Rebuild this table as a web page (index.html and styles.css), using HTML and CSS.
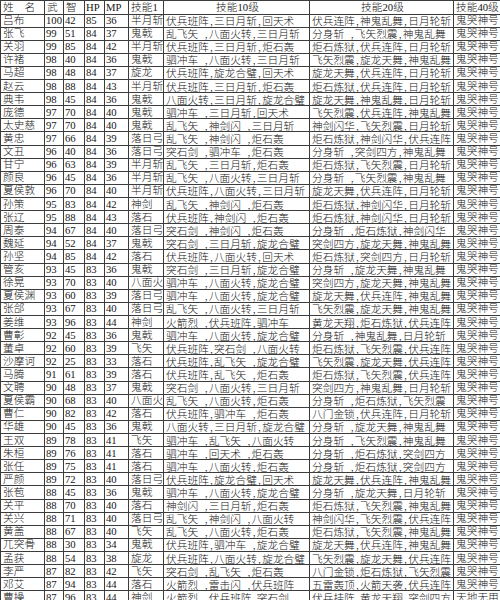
FILE: index.html
```html
<!DOCTYPE html>
<html lang="zh">
<head>
<meta charset="utf-8">
<title>武将技能表</title>
<link rel="stylesheet" href="styles.css">
</head>
<body>
<table class="sheet">
<colgroup>
<col class="c-name"><col class="c-wu"><col class="c-zhi"><col class="c-hp"><col class="c-mp"><col class="c-s1"><col class="c-s10"><col class="c-s20"><col class="c-s40">
</colgroup>
<thead>
<tr class="head"><td>姓　名</td><td>武</td><td>智</td><td class="lat">HP</td><td class="lat">MP</td><td>技能1</td><td class="ctr">技能10级</td><td class="ctr">技能20级</td><td>技能40级</td></tr>
</thead>
<tbody>
<tr><td>吕布</td><td class="num">100</td><td class="num">42</td><td class="num">85</td><td class="num">36</td><td>半月斩</td><td class="sk">伏兵班阵,三日月斩,回天术</td><td class="sk">伏兵连阵,神鬼乱舞,日月轮斩</td><td>鬼哭神号</td></tr>
<tr><td>张飞</td><td class="num">99</td><td class="num">51</td><td class="num">84</td><td class="num">37</td><td>鬼戟</td><td class="sk">乱飞矢　,八面火转,三日月斩</td><td class="sk">分身斩　,飞矢烈震,神鬼乱舞</td><td>鬼哭神号</td></tr>
<tr><td>关羽</td><td class="num">99</td><td class="num">85</td><td class="num">84</td><td class="num">42</td><td>半月斩</td><td class="sk">伏兵班阵,三日月斩,炬石轰</td><td class="sk">炬石炼狱,伏兵连阵,日月轮斩</td><td>鬼哭神号</td></tr>
<tr><td>许褚</td><td class="num">98</td><td class="num">40</td><td class="num">84</td><td class="num">36</td><td>鬼戟</td><td class="sk">驷冲车　,八面火转,三日月斩</td><td class="sk">飞矢烈震,旋龙天舞,神鬼乱舞</td><td>鬼哭神号</td></tr>
<tr><td>马超</td><td class="num">98</td><td class="num">48</td><td class="num">84</td><td class="num">37</td><td>旋龙</td><td class="sk">伏兵班阵,旋龙合璧,回天术</td><td class="sk">旋龙天舞,伏兵连阵,日月轮斩</td><td>鬼哭神号</td></tr>
<tr><td>赵云</td><td class="num">98</td><td class="num">88</td><td class="num">84</td><td class="num">43</td><td>半月斩</td><td class="sk">伏兵班阵,三日月斩,炬石轰</td><td class="sk">炬石炼狱,伏兵连阵,日月轮斩</td><td>鬼哭神号</td></tr>
<tr><td>典韦</td><td class="num">98</td><td class="num">45</td><td class="num">84</td><td class="num">36</td><td>鬼戟</td><td class="sk">八面火转,三日月斩,旋龙合璧</td><td class="sk">旋龙天舞,神鬼乱舞,日月轮斩</td><td>鬼哭神号</td></tr>
<tr><td>庞德</td><td class="num">97</td><td class="num">70</td><td class="num">84</td><td class="num">40</td><td>鬼戟</td><td class="sk">驷冲车　,三日月斩,回天术</td><td class="sk">飞矢烈震,伏兵连阵,神鬼乱舞</td><td>鬼哭神号</td></tr>
<tr><td>太史慈</td><td class="num">97</td><td class="num">70</td><td class="num">84</td><td class="num">40</td><td>鬼戟</td><td class="sk">乱飞矢　,神剑闪　,三日月斩</td><td class="sk">神剑闪华,飞矢烈震,日月轮斩</td><td>鬼哭神号</td></tr>
<tr><td>黄忠</td><td class="num">97</td><td class="num">66</td><td class="num">84</td><td class="num">39</td><td>落日弓</td><td class="sk">乱飞矢　,神剑闪　,炬石轰</td><td class="sk">炬石炼狱,神剑闪华,伏兵连阵</td><td>鬼哭神号</td></tr>
<tr><td>文丑</td><td class="num">96</td><td class="num">40</td><td class="num">84</td><td class="num">36</td><td>落日弓</td><td class="sk">突石剑　,驷冲车　,炬石轰</td><td class="sk">分身斩　,突剑四方,神鬼乱舞</td><td>鬼哭神号</td></tr>
<tr><td>甘宁</td><td class="num">96</td><td class="num">63</td><td class="num">84</td><td class="num">39</td><td>半月斩</td><td class="sk">乱飞矢　,三日月斩,炬石轰</td><td class="sk">炬石炼狱,飞矢烈震,日月轮斩</td><td>鬼哭神号</td></tr>
<tr><td>颜良</td><td class="num">96</td><td class="num">45</td><td class="num">84</td><td class="num">36</td><td>半月斩</td><td class="sk">乱飞矢　,八面火转,三日月斩</td><td class="sk">分身斩　,飞矢烈震,神鬼乱舞</td><td>鬼哭神号</td></tr>
<tr><td>夏侯敦</td><td class="num">96</td><td class="num">70</td><td class="num">84</td><td class="num">40</td><td>半月斩</td><td class="sk">伏兵班阵,八面火转,三日月斩</td><td class="sk">旋龙天舞,伏兵连阵,日月轮斩</td><td>鬼哭神号</td></tr>
<tr><td>孙策</td><td class="num">95</td><td class="num">83</td><td class="num">84</td><td class="num">42</td><td>神剑</td><td class="sk">乱飞矢　,神剑闪　,炬石轰</td><td class="sk">炬石炼狱,神剑闪华,日月轮斩</td><td>鬼哭神号</td></tr>
<tr><td>张辽</td><td class="num">95</td><td class="num">88</td><td class="num">84</td><td class="num">43</td><td>落石</td><td class="sk">伏兵班阵,神剑闪　,炬石轰</td><td class="sk">炬石炼狱,神剑闪华,日月轮斩</td><td>鬼哭神号</td></tr>
<tr><td>周泰</td><td class="num">94</td><td class="num">67</td><td class="num">84</td><td class="num">40</td><td>落日弓</td><td class="sk">突石剑　,神剑闪　,炬石轰</td><td class="sk">分身斩　,炬石炼狱,神剑闪华</td><td>鬼哭神号</td></tr>
<tr><td>魏延</td><td class="num">94</td><td class="num">52</td><td class="num">84</td><td class="num">37</td><td>鬼戟</td><td class="sk">突石剑　,三日月斩,旋龙合璧</td><td class="sk">突剑四方,旋龙天舞,神鬼乱舞</td><td>鬼哭神号</td></tr>
<tr><td>孙坚</td><td class="num">94</td><td class="num">85</td><td class="num">84</td><td class="num">42</td><td>落石</td><td class="sk">伏兵班阵,八面火转,回天术</td><td class="sk">炬石炼狱,突剑四方,日月轮斩</td><td>鬼哭神号</td></tr>
<tr><td>管亥</td><td class="num">93</td><td class="num">45</td><td class="num">83</td><td class="num">36</td><td>鬼戟</td><td class="sk">突石剑　,三日月斩,旋龙合璧</td><td class="sk">分身斩　,旋龙天舞,神鬼乱舞</td><td>鬼哭神号</td></tr>
<tr><td>徐晃</td><td class="num">93</td><td class="num">70</td><td class="num">83</td><td class="num">40</td><td>八面火</td><td class="sk">驷冲车　,八面火转,旋龙合璧</td><td class="sk">突剑四方,旋龙天舞,神鬼乱舞</td><td>鬼哭神号</td></tr>
<tr><td>夏侯渊</td><td class="num">93</td><td class="num">60</td><td class="num">83</td><td class="num">39</td><td>落日弓</td><td class="sk">驷冲车　,八面火转,旋龙合璧</td><td class="sk">旋龙天舞,伏兵连阵,神鬼乱舞</td><td>鬼哭神号</td></tr>
<tr><td>张郃</td><td class="num">93</td><td class="num">67</td><td class="num">83</td><td class="num">40</td><td>落日弓</td><td class="sk">乱飞矢　,八面火转,三日月斩</td><td class="sk">飞矢烈震,旋龙天舞,神鬼乱舞</td><td>鬼哭神号</td></tr>
<tr><td>姜维</td><td class="num">93</td><td class="num">96</td><td class="num">83</td><td class="num">44</td><td>神剑</td><td class="sk">火箭烈　,伏兵班阵,驷冲车</td><td class="sk">黄龙天翔,炬石炼狱,伏兵连阵</td><td>鬼哭神号</td></tr>
<tr><td>曹彰</td><td class="num">92</td><td class="num">45</td><td class="num">83</td><td class="num">36</td><td>鬼戟</td><td class="sk">驷冲车　,八面火转,旋龙合璧</td><td class="sk">分身斩　,神鬼乱舞,日月轮斩</td><td>鬼哭神号</td></tr>
<tr><td>董卓</td><td class="num">92</td><td class="num">60</td><td class="num">83</td><td class="num">39</td><td>飞矢</td><td class="sk">伏兵班阵,突石剑　,八面火转</td><td class="sk">炬石炼狱,飞矢烈震,伏兵连阵</td><td>鬼哭神号</td></tr>
<tr><td>沙摩诃</td><td class="num">92</td><td class="num">25</td><td class="num">83</td><td class="num">33</td><td>落石</td><td class="sk">伏兵班阵,乱飞矢　,旋龙合璧</td><td class="sk">飞矢烈震,旋龙天舞,伏兵连阵</td><td>鬼哭神号</td></tr>
<tr><td>马腾</td><td class="num">91</td><td class="num">61</td><td class="num">83</td><td class="num">39</td><td>落石</td><td class="sk">伏兵班阵,乱飞矢　,炬石轰</td><td class="sk">炬石炼狱,飞矢烈震,伏兵连阵</td><td>鬼哭神号</td></tr>
<tr><td>文聘</td><td class="num">90</td><td class="num">48</td><td class="num">83</td><td class="num">37</td><td>鬼戟</td><td class="sk">突石剑　,八面火转,三日月斩</td><td class="sk">突剑四方,神鬼乱舞,日月轮斩</td><td>鬼哭神号</td></tr>
<tr><td>夏侯霸</td><td class="num">90</td><td class="num">68</td><td class="num">83</td><td class="num">40</td><td>八面火</td><td class="sk">乱飞矢　,八面火转,炬石轰</td><td class="sk">分身斩　,炬石炼狱,飞矢烈震</td><td>鬼哭神号</td></tr>
<tr><td>曹仁</td><td class="num">90</td><td class="num">82</td><td class="num">83</td><td class="num">42</td><td>落石</td><td class="sk">伏兵班阵,驷冲车　,炬石轰</td><td class="sk">八门金锁,伏兵连阵,日月轮斩</td><td>鬼哭神号</td></tr>
<tr><td>华雄</td><td class="num">90</td><td class="num">45</td><td class="num">83</td><td class="num">36</td><td>鬼戟</td><td class="sk">八面火转,三日月斩,旋龙合璧</td><td class="sk">分身斩　,旋龙天舞,神鬼乱舞</td><td>鬼哭神号</td></tr>
<tr><td>王双</td><td class="num">89</td><td class="num">78</td><td class="num">83</td><td class="num">41</td><td>飞矢</td><td class="sk">驷冲车　,乱飞矢　,八面火转</td><td class="sk">分身斩　,飞矢烈震,神鬼乱舞</td><td>鬼哭神号</td></tr>
<tr><td>朱桓</td><td class="num">89</td><td class="num">76</td><td class="num">83</td><td class="num">41</td><td>落石</td><td class="sk">驷冲车　,回天术　,炬石轰</td><td class="sk">分身斩　,炬石炼狱,突剑四方</td><td>鬼哭神号</td></tr>
<tr><td>张任</td><td class="num">89</td><td class="num">75</td><td class="num">83</td><td class="num">41</td><td>落石</td><td class="sk">驷冲车　,八面火转,炬石轰</td><td class="sk">分身斩　,炬石炼狱,突剑四方</td><td>鬼哭神号</td></tr>
<tr><td>严颜</td><td class="num">89</td><td class="num">72</td><td class="num">83</td><td class="num">40</td><td>落日弓</td><td class="sk">伏兵班阵,旋龙合璧,回天术</td><td class="sk">旋龙天舞,伏兵连阵,神鬼乱舞</td><td>鬼哭神号</td></tr>
<tr><td>张苞</td><td class="num">88</td><td class="num">45</td><td class="num">83</td><td class="num">36</td><td>鬼戟</td><td class="sk">驷冲车　,八面火转,旋龙合璧</td><td class="sk">分身斩　,旋龙天舞,日月轮斩</td><td>鬼哭神号</td></tr>
<tr><td>关平</td><td class="num">88</td><td class="num">70</td><td class="num">83</td><td class="num">40</td><td>落石</td><td class="sk">神剑闪　,三日月斩,炬石轰</td><td class="sk">炬石炼狱,飞矢烈震,神鬼乱舞</td><td>鬼哭神号</td></tr>
<tr><td>关兴</td><td class="num">88</td><td class="num">71</td><td class="num">83</td><td class="num">40</td><td>落日弓</td><td class="sk">乱飞矢　,神剑闪　,八面火转</td><td class="sk">神剑闪华,飞矢烈震,伏兵连阵</td><td>鬼哭神号</td></tr>
<tr><td>黄盖</td><td class="num">88</td><td class="num">67</td><td class="num">83</td><td class="num">40</td><td>飞矢</td><td class="sk">乱飞矢　,八面火转,炬石轰</td><td class="sk">炬石炼狱,飞矢烈震,神鬼乱舞</td><td>鬼哭神号</td></tr>
<tr><td>兀突骨</td><td class="num">88</td><td class="num">30</td><td class="num">83</td><td class="num">34</td><td>鬼戟</td><td class="sk">伏兵班阵,驷冲车　,旋龙合璧</td><td class="sk">旋龙天舞,伏兵连阵,神鬼乱舞</td><td>鬼哭神号</td></tr>
<tr><td>孟获</td><td class="num">88</td><td class="num">54</td><td class="num">83</td><td class="num">38</td><td>旋龙</td><td class="sk">伏兵班阵,八面火转,旋龙合璧</td><td class="sk">飞矢烈震,旋龙天舞,伏兵连阵</td><td>鬼哭神号</td></tr>
<tr><td>李严</td><td class="num">87</td><td class="num">82</td><td class="num">83</td><td class="num">42</td><td>飞矢</td><td class="sk">突石剑　,乱飞矢　,炬石轰</td><td class="sk">八门金锁,炬石炼狱,飞矢烈震</td><td>鬼哭神号</td></tr>
<tr><td>邓艾</td><td class="num">87</td><td class="num">94</td><td class="num">83</td><td class="num">44</td><td>落石</td><td class="sk">火箭烈　,雷击闪　,伏兵班阵</td><td class="sk">五雷轰顶,火箭天袭,伏兵连阵</td><td>鬼哭神号</td></tr>
<tr><td>曹操</td><td class="num">87</td><td class="num">96</td><td class="num">83</td><td class="num">44</td><td>神剑</td><td class="sk">火箭烈　,伏兵班阵,突石剑</td><td class="sk">伏兵挂阵,黄龙天翔,突剑四方</td><td>天地无用</td></tr>
</tbody>
</table>
</body>
</html>
```

FILE: styles.css
```css
html, body {
  margin: 0;
  padding: 0;
  background: #ffffff;
}

body {
  width: 500px;
  height: 600px;
  overflow: hidden;
}

.sheet {
  border-collapse: collapse;
  table-layout: fixed;
  width: 506px;
  font-family: "Liberation Serif", "Noto Sans CJK SC", serif;
  font-size: 10.7px;
  font-weight: 300;
  color: #161616;
}

.c-name { width: 44px; }
.c-wu { width: 19px; }
.c-zhi { width: 21px; }
.c-hp { width: 20px; }
.c-mp { width: 24px; }
.c-s1 { width: 35px; }
.c-s10 { width: 146px; }
.c-s20 { width: 144px; }
.c-s40 { width: 53px; }

.sheet tr {
  height: 13.11px;
}

.sheet .head {
  height: 13.5px;
}

.sheet td {
  border: 1px solid #3c3c3c;
  padding: 0 0 0 2px;
  line-height: 11px;
  white-space: nowrap;
  overflow: hidden;
  vertical-align: middle;
  text-align: left;
}

.sheet .ctr {
  text-align: center;
}

.sheet .num,
.sheet .lat {
  padding-left: 1px;
  font-weight: 400;
}

.sheet .sk {
  font-family: "Noto Sans CJK SC", sans-serif;
  font-feature-settings: "hwid" 1;
}
```
